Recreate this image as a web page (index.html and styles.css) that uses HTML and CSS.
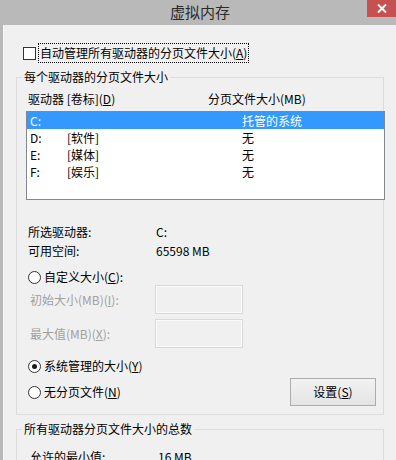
FILE: index.html
```html
<!DOCTYPE html>
<html lang="zh-CN">
<head>
<meta charset="utf-8">
<title>虚拟内存</title>
<link rel="stylesheet" href="styles.css">
</head>
<body>
<div class="window">
  <div class="titlebar">
    <span class="title">虚拟内存</span>
    <div class="close">
      <svg width="10" height="9" viewBox="0 0 10 9"><path d="M1 0.5 L9 8.5 M9 0.5 L1 8.5" stroke="#fff" stroke-width="2" fill="none"/></svg>
    </div>
  </div>
  <div class="client">
    <div class="autorow">
      <span class="checkbox"></span>
      <span class="focus">自动管理所有驱动器的分页文件大小(<u>A</u>)</span>
    </div>

    <fieldset class="group g1">
      <legend>每个驱动器的分页文件大小</legend>
      <div class="listhead">
        <span class="hcol">驱动器 [卷标](<u>D</u>)</span>
        <span>分页文件大小(MB)</span>
      </div>
      <div class="listbox">
        <div class="row sel"><span class="c1">C:</span><span class="c2"></span><span class="c3">托管的系统</span></div>
        <div class="row"><span class="c1">D:</span><span class="c2">[软件]</span><span class="c3">无</span></div>
        <div class="row"><span class="c1">E:</span><span class="c2">[媒体]</span><span class="c3">无</span></div>
        <div class="row"><span class="c1">F:</span><span class="c2">[娱乐]</span><span class="c3">无</span></div>
      </div>

      <div class="info">
        <div class="irow"><span class="ilabel">所选驱动器:</span><span>C:</span></div>
        <div class="irow"><span class="ilabel">可用空间:</span><span>65598 MB</span></div>
      </div>

      <div class="radiorow r1"><span class="radio"></span><span>自定义大小(<u>C</u>):</span></div>

      <div class="tbrow"><span class="tblabel">初始大小(MB)(<u>I</u>):</span><span class="textbox"></span></div>
      <div class="tbrow tb2"><span class="tblabel">最大值(MB)(<u>X</u>):</span><span class="textbox"></span></div>

      <div class="radiorow r2"><span class="radio checked"></span><span>系统管理的大小(<u>Y</u>)</span></div>

      <div class="lastrow">
        <div class="radiorow"><span class="radio"></span><span>无分页文件(<u>N</u>)</span></div>
        <div class="button">设置(<u>S</u>)</div>
      </div>
    </fieldset>

    <fieldset class="group g2">
      <legend>所有驱动器分页文件大小的总数</legend>
      <div class="irow trow"><span class="tlabel">允许的最小值:</span><span>16 MB</span></div>
    </fieldset>
  </div>
</div>
</body>
</html>
```

FILE: styles.css
```css
html, body {
  margin: 0;
  padding: 0;
}
body {
  width: 396px;
  height: 460px;
  overflow: hidden;
  background: #b9b9b9;
  font-family: "Noto Sans CJK SC", "Noto Sans", sans-serif;
  font-size: 12px;
  color: #000;
}
u {
  text-decoration: underline;
  text-underline-offset: 1px;
}
.window {
  width: 396px;
  height: 460px;
  display: flex;
  flex-direction: column;
}
.titlebar {
  height: 25px;
  display: flex;
  flex: none;
  background: #b9b9b9;
}
.title {
  flex: 1;
  text-align: center;
  padding-left: 33px;
  font-size: 15px;
  line-height: 24px;
  color: #2b2b2b;
}
.close {
  width: 29px;
  height: 17px;
  background: #c75050;
  display: flex;
  align-items: center;
  justify-content: center;
  padding-bottom: 1px;
  box-sizing: border-box;
}
.client {
  flex: 1;
  margin-left: 3px;
  background: #f0f0f0;
  border-left: 1px solid #f7f7f7;
  padding-top: 18px;
  padding-left: 12px;
  box-sizing: border-box;
}
.autorow {
  display: flex;
  align-items: center;
  height: 20px;
  margin-left: 7px;
}
.checkbox {
  width: 13px;
  height: 13px;
  box-sizing: border-box;
  border: 1px solid #333;
  background: #fff;
  margin-right: 2px;
}
.focus {
  border: 1px dotted #000;
  height: 20px;
  line-height: 18px;
  box-sizing: border-box;
  padding: 0 1px 0 1px;
}
.group {
  margin: 0;
  padding: 0;
  border: 1px solid #dcdcdc;
  width: 368px;
  box-sizing: border-box;
  min-width: 0;
}
.group legend {
  margin-left: 5px;
  padding: 0 2px;
  line-height: 16px;
}
.g1 {
  margin-top: 6px;
  padding-bottom: 8px;
}
.listhead {
  display: flex;
  margin-top: 6px;
  padding-left: 11px;
  line-height: 16px;
}
.hcol {
  width: 180px;
}
.listbox {
  margin-top: 4px;
  margin-left: 9px;
  width: 359px;
  height: 89px;
  box-sizing: border-box;
  border: 1px solid #828790;
  background: #fff;
}
.row {
  display: flex;
  height: 17px;
  line-height: 17px;
  padding-left: 3px;
}
.row.sel {
  background: #3399ff;
  color: #fff;
}
.c1 { width: 37px; }
.c2 { width: 175px; }
.info {
  margin-top: 22px;
  padding-left: 11px;
}
.irow {
  display: flex;
  line-height: 19px;
}
.ilabel {
  width: 128px;
}
.radiorow {
  display: flex;
  align-items: center;
  height: 16px;
  line-height: 16px;
  padding-left: 11px;
}
.radio {
  width: 13px;
  height: 13px;
  box-sizing: border-box;
  border-radius: 50%;
  border: 1px solid #333;
  background: #fff;
  margin-right: 3px;
  display: flex;
  align-items: center;
  justify-content: center;
}
.radio.checked::after {
  content: "";
  width: 5px;
  height: 5px;
  border-radius: 50%;
  background: #1a1a1a;
}
.r1 {
  margin-top: 9px;
}
.tbrow {
  display: flex;
  align-items: center;
  padding-left: 13px;
  height: 29px;
  color: #a0a0a0;
}
.tb2 {
  margin-top: 5px;
}
.tblabel {
  width: 125px;
}
.textbox {
  width: 88px;
  height: 29px;
  box-sizing: border-box;
  border: 1px solid #d9d9d9;
  box-shadow: inset 0 0 0 1px #fbfbfb;
  background: #f0f0f0;
}
.r2 {
  margin-top: 10px;
}
.lastrow {
  display: flex;
  align-items: center;
  justify-content: space-between;
  margin-top: 4px;
  height: 28px;
}
.button {
  width: 86px;
  height: 28px;
  box-sizing: border-box;
  margin-right: 7px;
  border: 1px solid #acacac;
  background: linear-gradient(#f2f2f2, #e4e4e4);
  text-align: center;
  line-height: 26px;
}
.g2 {
  margin-top: 6px;
  height: 60px;
}
.trow {
  margin-top: 11px;
  padding-left: 13px;
  line-height: 18px;
}
.tlabel {
  width: 128px;
}
```
